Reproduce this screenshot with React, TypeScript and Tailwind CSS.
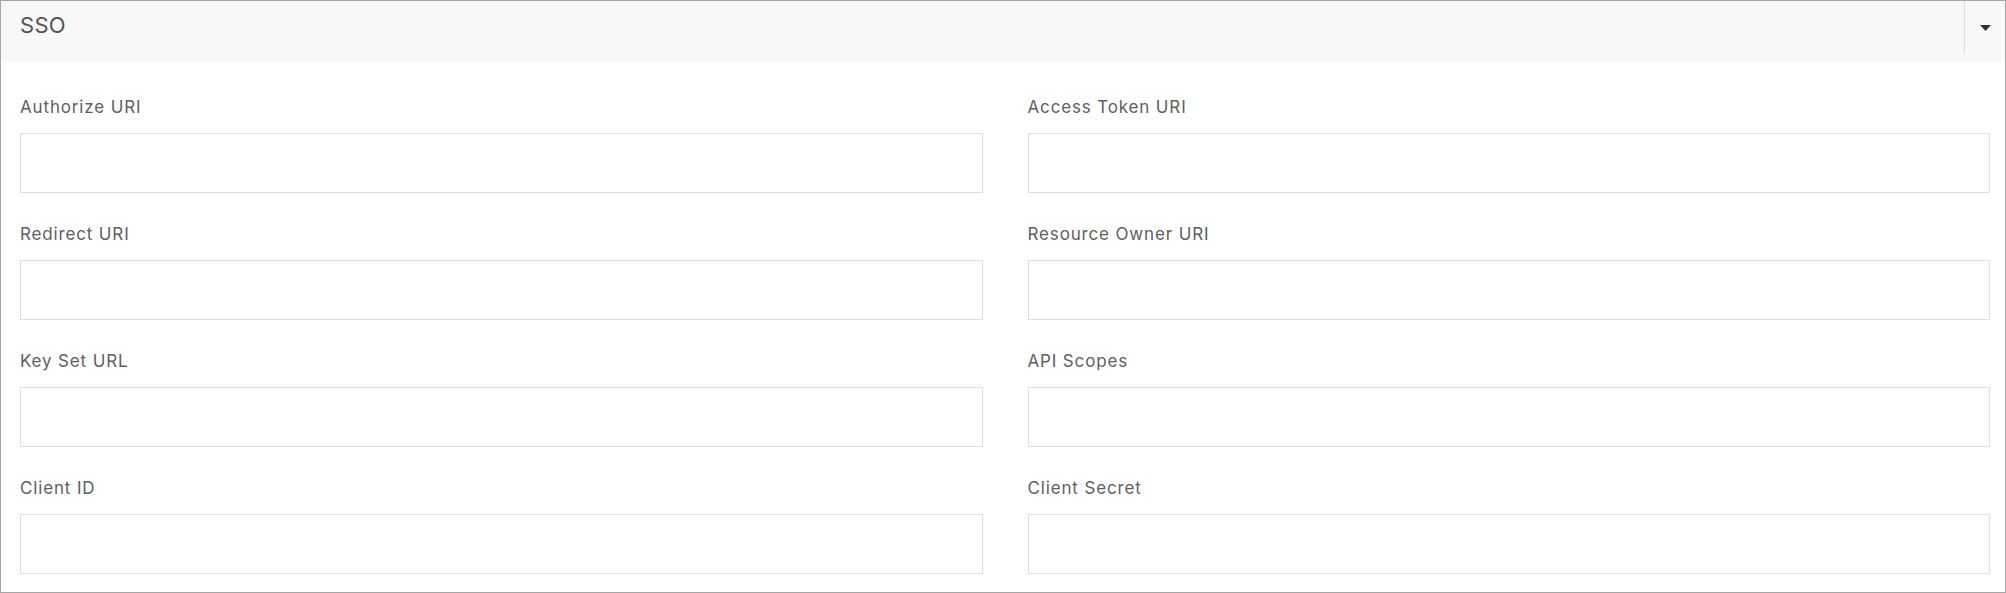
const fields: [string, string][] = [
  ["Authorize URI", "Access Token URI"],
  ["Redirect URI", "Resource Owner URI"],
  ["Key Set URL", "API Scopes"],
  ["Client ID", "Client Secret"],
];

function Field({ label }: { label: string }) {
  return (
    <div className="flex flex-col">
      <label className="text-[17px] leading-[20px] tracking-[0.85px] text-[#606060]">{label}</label>
      <input
        type="text"
        className="mt-[16px] h-[60px] w-full border border-[#dfdfdf] bg-white outline-none"
      />
    </div>
  );
}

export default function App() {
  return (
    <div
      className="w-[2006px] h-[593px] border border-[#a6a6a6] bg-white flex flex-col"
      style={{ fontFamily: "Inter, 'Noto Sans', sans-serif" }}
    >
      <div className="h-[60px] bg-[#f8f8f8] flex justify-between">
        <div className="pl-[19px] pt-[10px] text-[22px] leading-[28px] tracking-[0.3px] text-[#555555]">SSO</div>
        <button className="w-[41px] h-[53px] border-l border-[#dcdcdc] flex items-center justify-center">
          <svg width="11" height="6" viewBox="0 0 11 6">
            <path d="M0 0 L11 0 L5.5 6 Z" fill="#333333" />
          </svg>
        </button>
      </div>
      <div className="pl-[19px] pr-[15px] pt-[36px] grid grid-cols-2 gap-x-[45px] gap-y-[31px]">
        {fields.map(([a, b]) => (
          <>
            <Field key={a} label={a} />
            <Field key={b} label={b} />
          </>
        ))}
      </div>
    </div>
  );
}
